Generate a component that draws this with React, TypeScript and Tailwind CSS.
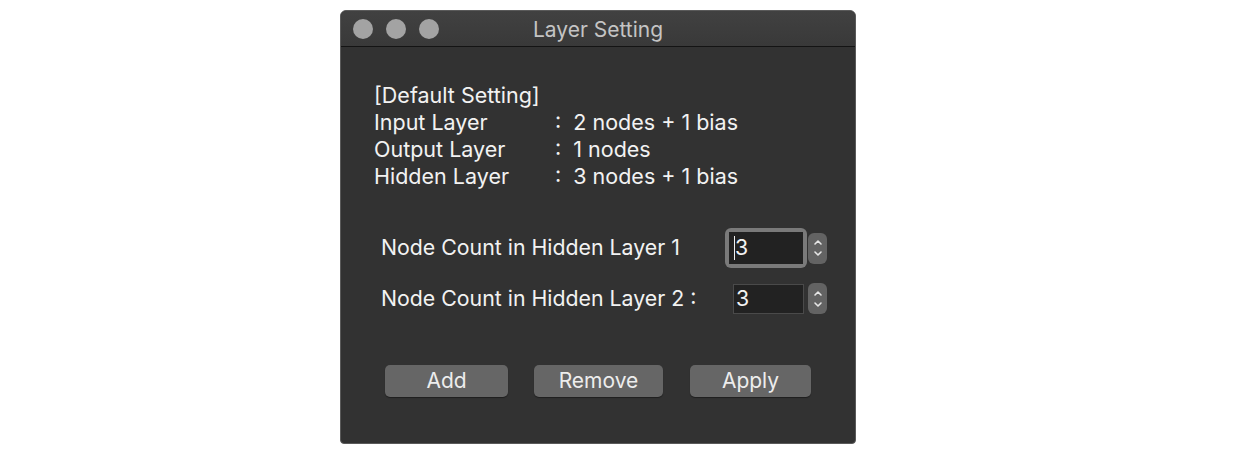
import React from "react";

const font = { fontFamily: "Inter, 'Noto Sans', sans-serif" };

const Stepper = () => (
  <div className="flex h-[31px] w-[19px] flex-col items-center justify-center rounded-[6px] bg-[#636363]">
    <svg width="10" height="24" viewBox="0 0 10 24" fill="none" stroke="#e6e6e6" strokeWidth="1.6" strokeLinecap="round" strokeLinejoin="round">
      <path d="M2 8 L5 5 L8 8" />
      <path d="M2 16 L5 19 L8 16" />
    </svg>
  </div>
);

const Btn = ({ label, w }: { label: string; w: string }) => (
  <button className={`${w} h-[32px] rounded-[5px] bg-[#666666] text-[21px] text-[#ededed] shadow-[0_1px_1px_rgba(0,0,0,0.4)]`}>
    {label}
  </button>
);

export default function App() {
  return (
    <div className="flex h-[456px] w-[1246px] bg-white pl-[340px] pt-[10px]" style={font}>
      <div className="flex h-[434px] w-[516px] flex-col overflow-hidden rounded-t-[6px] rounded-b-[4px] border border-[#5a5a5a] bg-[#323232]">
        <div className="relative flex h-[36px] items-center border-b border-[#141414] bg-gradient-to-b from-[#414141] to-[#393939]">
          <div className="ml-[12px] flex gap-[13px]">
            <span className="h-[20px] w-[20px] rounded-full bg-[#a3a3a3]" />
            <span className="h-[20px] w-[20px] rounded-full bg-[#a3a3a3]" />
            <span className="h-[20px] w-[20px] rounded-full bg-[#a3a3a3]" />
          </div>
          <div className="absolute inset-0 flex items-center justify-center pt-[2px] text-[21px] text-[#c4c4c4]">
            Layer Setting
          </div>
        </div>

        <div className="flex flex-col pl-[33px] pt-[35px] text-[21.5px] leading-[27px] text-[#f2f2f2]">
          <div>[Default Setting]</div>
          <div className="flex"><span className="w-[181px]">Input Layer</span><span>:&nbsp; 2 nodes + 1 bias</span></div>
          <div className="flex"><span className="w-[181px]">Output Layer</span><span>:&nbsp; 1 nodes</span></div>
          <div className="flex"><span className="w-[181px]">Hidden Layer</span><span>:&nbsp; 3 nodes + 1 bias</span></div>
        </div>

        <div className="mt-[38px] flex flex-col pl-[40px] text-[21.3px] text-[#f2f2f2]">
          <div className="flex h-[40px] items-center">
            <span className="w-[344px]">Node Count in Hidden Layer 1</span>
            <div className="rounded-[6px] bg-[#7a7a7a] p-[4px]">
              <div className="flex h-[32px] w-[74px] items-center bg-[#222222] pl-[5px]">
                <span className="h-[24px] w-[1px] bg-[#f0f0f0]" />
                <span>3</span>
              </div>
            </div>
            <div className="ml-[1px]"><Stepper /></div>
          </div>
          <div className="mt-[15px] flex h-[31px] items-center">
            <span className="w-[352px]">Node Count in Hidden Layer 2 :</span>
            <div className="flex h-[30px] w-[71px] items-center border border-[#4a4a4a] bg-[#222222] pl-[2px]">3</div>
            <div className="ml-[4px]"><Stepper /></div>
          </div>
        </div>

        <div className="mt-[51px] flex pl-[44px]">
          <Btn label="Add" w="w-[123px]" />
          <div className="ml-[26px]"><Btn label="Remove" w="w-[129px]" /></div>
          <div className="ml-[27px]"><Btn label="Apply" w="w-[121px]" /></div>
        </div>
      </div>
    </div>
  );
}
